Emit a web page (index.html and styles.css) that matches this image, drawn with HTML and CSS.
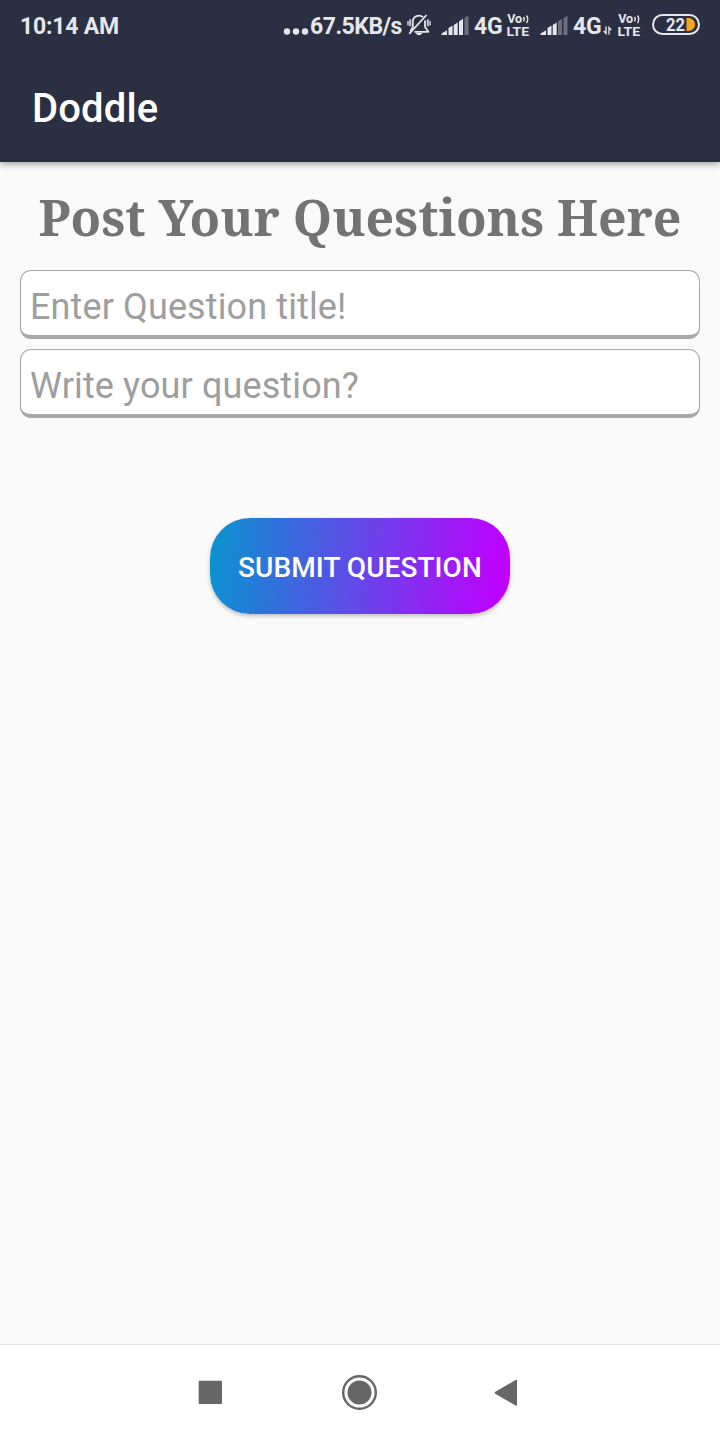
FILE: index.html
```html
<!DOCTYPE html>
<html lang="en">
<head>
<meta charset="utf-8">
<title>Doddle</title>
<link rel="stylesheet" href="styles.css">
</head>
<body>
<header class="top">
  <div class="status">
    <span class="clock">10:14 AM</span>
    <svg class="dots" viewBox="0 0 26 24"><g fill="#e6e7ea"><circle cx="4" cy="18.500" r="3.200"/><circle cx="13" cy="18.500" r="3.200"/><circle cx="22" cy="18.500" r="3.200"/></g></svg>
    <span class="speed">67.5KB/s</span>
    <svg class="bell" viewBox="0 0 26 24">
      <g fill="none" stroke="#e6e7ea" stroke-width="1.800" stroke-linejoin="round">
        <path d="M17 4C13 1 7 3 6.800 8.500v5.400L4.500 18.500M19 7.500v6.400l3.400 4.900H8.500"/>
        <path d="M3.200 20.800L20.500 2"/>
      </g>
      <g fill="#c5c7ce"><path d="M3.200 6.300h2v7h-2zM1.200 8h1.600v4.500H1.200zM20.800 6.300h2v7h-2zM23.200 8h1.600v4.500h-1.600z"/></g>
      <path d="M9.500 20h7q-3.500 4.400-7 0z" fill="#e6e7ea"/>
    </svg>
    <svg class="signal" viewBox="0 0 28 24"><g fill="#e6e7ea"><path d="M0.500 22v-1.400L6 17.300V22z"/><path d="M7.500 22v-7l4-2.500V22zM12.700 22V12l4-2.500V22zM18 22V8.500l4-2.700V22z"/></g><path d="M23.500 22V5l4-2.200V22z" fill="#6b6e7c"/></svg>
    <span class="net">4G</span>
    <svg class="volte" viewBox="0 0 24 24"><text class="vo" x="1.200" y="9.800" textLength="15" lengthAdjust="spacingAndGlyphs">Vo</text><path d="M17.500 4q1.500 2 0 4.500M20.500 2.500q2.500 3.700 0 7.500" fill="none" stroke="#e6e7ea" stroke-width="1.400"/><text class="lte" x="0.600" y="22.500" textLength="22.500" lengthAdjust="spacingAndGlyphs">LTE</text></svg>
    <svg class="signal second" viewBox="0 0 28 24"><g fill="#e6e7ea"><path d="M0.500 22v-1.400L6 17.300V22z"/><path d="M7.500 22v-7l4-2.500V22zM12.700 22V12l4-2.500V22z"/></g><path d="M18 22V8.500l4-2.700V22zM23.500 22V5l4-2.200V22z" fill="#6b6e7c"/></svg>
    <span class="net">4G</span>
    <svg class="arrows" viewBox="0 0 10 24"><path d="M4 13.500v7L1.700 18M7 21.500v-7L9.300 17" fill="none" stroke="#e6e7ea" stroke-width="1.400"/></svg>
    <svg class="volte late" viewBox="0 0 24 24"><text class="vo" x="1.200" y="9.800" textLength="15" lengthAdjust="spacingAndGlyphs">Vo</text><path d="M17.500 4q1.500 2 0 4.500M20.500 2.500q2.500 3.700 0 7.500" fill="none" stroke="#e6e7ea" stroke-width="1.400"/><text class="lte" x="0.600" y="22.500" textLength="22.500" lengthAdjust="spacingAndGlyphs">LTE</text></svg>
    <svg class="battery" viewBox="0 0 48 24">
      <rect x="1" y="2" width="46" height="19" rx="9.500" fill="none" stroke="#e6e7ea" stroke-width="2"/>
      <path d="M34.500 5.100h2.200a6.400 6.400 0 0 1 0 12.800h-2.200z" fill="#f5a623"/>
      <text x="14" y="18" textLength="19" lengthAdjust="spacingAndGlyphs" class="level">22</text>
    </svg>
  </div>
  <div class="appbar">Doddle</div>
</header>
<main class="content">
  <h1 class="heading">Post Your Questions Here</h1>
  <input class="field" type="text" placeholder="Enter Question title!">
  <input class="field" type="text" placeholder="Write your question?">
  <button class="submit" type="button">SUBMIT QUESTION</button>
</main>
<footer class="nav">
  <svg viewBox="0 0 36 36"><rect x="6.700" y="6.700" width="23.300" height="23.300" rx="1" fill="#666"/></svg>
  <svg viewBox="0 0 36 36"><circle cx="17.500" cy="18.500" r="16.300" fill="none" stroke="#666" stroke-width="2.400"/><circle cx="17.500" cy="18.500" r="12" fill="#666"/></svg>
  <svg viewBox="0 0 36 36"><path d="M3.300 17.700L24 5.800q1-.3 1 .7v24.500q0 1-1 .7L3.300 19.700q-1.300-1 0-2z" fill="#666"/></svg>
</footer>
</body>
</html>
```
FILE: styles.css
```css
* { box-sizing: border-box; }
body {
  margin: 0;
  width: 720px;
  height: 1440px;
  display: flex;
  flex-direction: column;
  background: #fafafa;
  font-family: Roboto, "Liberation Sans", sans-serif;
}
.top {
  height: 162px;
  flex: none;
  background: #2b2f42;
  box-shadow: 0 2px 7px rgba(0, 0, 0, .38);
}
.status {
  height: 50px;
  padding: 4px 20px 0;
  display: flex;
  align-items: center;
  color: #e6e7ea;
  font-size: 23px;
  font-weight: 700;
  line-height: 28px;
  letter-spacing: -.2px;
  white-space: nowrap;
}
.status svg { height: 24px; flex: none; margin-top: -4px; }
.clock { width: 263px; }
.status .dots { width: 26px; }
.speed { width: 97px; padding-left: 1px; letter-spacing: -.5px; }
.status .bell { width: 26px; }
.status .signal { width: 28px; margin-left: 9px; }
.net { width: 32px; margin-left: 5px; }
.status .volte { width: 24px; }
.status .second { margin-left: 10px; }
.status .arrows { width: 10px; margin-left: -3px; }
.status .late { margin-left: 5px; }
.status .battery { width: 48px; margin-left: auto; }
.level { font-size: 19px; font-weight: 700; letter-spacing: 0; fill: #e6e7ea; }
.vo, .lte { font-weight: 700; letter-spacing: 0; fill: #e6e7ea; }
.vo { font-size: 12px; }
.lte { font-size: 12.5px; }
.appbar {
  height: 112px;
  padding: 0 32px;
  color: #fff;
  font-size: 40px;
  font-weight: 500;
  line-height: 118px;
  letter-spacing: .15px;
}
.content {
  flex: 1;
  padding: 20px 20px 0;
  display: flex;
  flex-direction: column;
}
.heading {
  margin: 0 0 20px;
  height: 68px;
  line-height: 70px;
  text-align: center;
  white-space: nowrap;
  color: #737373;
  font-family: "Noto Serif", "Droid Serif", "DejaVu Serif Condensed", "DejaVu Serif", serif;
  font-size: 50px;
  font-weight: 700;
}
.field {
  width: 680px;
  height: 69px;
  margin: 0 0 10px;
  padding: 8px 9px 0;
  border: 1px solid #a8a8a8;
  border-bottom-width: 4px;
  border-radius: 11px;
  background: #fff;
  font: 400 36px Roboto, "Liberation Sans", sans-serif;
  letter-spacing: .12px;
}
.field::placeholder { color: #9e9e9e; opacity: 1; }
.submit {
  align-self: center;
  width: 300px;
  height: 96px;
  margin-top: 90px;
  padding: 3px 0 0;
  border: 0;
  border-radius: 40px;
  background: linear-gradient(95deg, #0894d0, #4f58e3 39%, #bf00ff 97%);
  box-shadow: 0 2px 4px rgba(0, 0, 0, .25);
  color: #fff;
  font: 500 28px Roboto, "Liberation Sans", sans-serif;
  letter-spacing: .06px;
}
.nav {
  height: 96px;
  flex: none;
  padding-bottom: 2px;
  border-top: 1px solid #e2e2e2;
  background: #fff;
  display: flex;
  justify-content: center;
  align-items: center;
  gap: 114px;
}
.nav svg { width: 36px; height: 36px; overflow: visible; }
```
